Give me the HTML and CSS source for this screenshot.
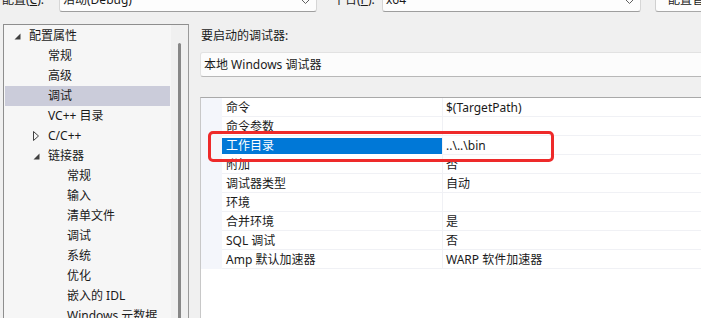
FILE: index.html
```html
<!DOCTYPE html>
<html lang="zh-CN">
<head>
    <meta charset="UTF-8">
    <title>调试 属性页</title>
    <link rel="stylesheet" href="styles.css">
</head>
<body>
    <div class="toolbar">
        <span class="label label-config">配置(<u>C</u>):</span>
        <div class="combo combo-config">
            <span>活动(Debug)</span>
            <svg class="chevron" width="9" height="6" viewBox="0 0 9 6"><path d="M1 1 L4.5 4.5 L8 1" fill="none" stroke="#606060" stroke-width="1"/></svg>
        </div>
        <span class="label label-platform">平台(<u>P</u>):</span>
        <div class="combo combo-platform">
            <span>x64</span>
            <svg class="chevron" width="9" height="6" viewBox="0 0 9 6"><path d="M1 1 L4.5 4.5 L8 1" fill="none" stroke="#606060" stroke-width="1"/></svg>
        </div>
        <button class="btn">配置管理器(<u>O</u>)...</button>
    </div>

    <div class="main">
        <div class="tree">
            <ul class="nodes">
                <li class="node lv0"><span class="twisty"><svg width="7" height="7" viewBox="0 0 7 7"><path d="M6.5 0.5 V6.5 H0.5 Z" fill="#404040"/></svg></span>配置属性</li>
                <li class="node lv1"><span class="twisty"></span>常规</li>
                <li class="node lv1"><span class="twisty"></span>高级</li>
                <li class="node lv1 selected"><span class="twisty"></span>调试</li>
                <li class="node lv1"><span class="twisty"></span>VC++ 目录</li>
                <li class="node lv1"><span class="twisty"><svg width="7" height="10" viewBox="0 0 7 10"><path d="M0.5 0.5 V9.5 L5.5 5 Z" fill="none" stroke="#404040" stroke-width="1"/></svg></span>C/C++</li>
                <li class="node lv1"><span class="twisty"><svg width="7" height="7" viewBox="0 0 7 7"><path d="M6.5 0.5 V6.5 H0.5 Z" fill="#404040"/></svg></span>链接器</li>
                <li class="node lv2"><span class="twisty"></span>常规</li>
                <li class="node lv2"><span class="twisty"></span>输入</li>
                <li class="node lv2"><span class="twisty"></span>清单文件</li>
                <li class="node lv2"><span class="twisty"></span>调试</li>
                <li class="node lv2"><span class="twisty"></span>系统</li>
                <li class="node lv2"><span class="twisty"></span>优化</li>
                <li class="node lv2"><span class="twisty"></span>嵌入的 IDL</li>
                <li class="node lv2"><span class="twisty"></span>Windows 元数据</li>
            </ul>
            <div class="scrollbar"><div class="thumb"></div></div>
        </div>

        <div class="pane">
            <div class="pane-label">要启动的调试器:</div>
            <div class="debugger-box">本地 Windows 调试器</div>

            <div class="grid">
                <div class="row"><div class="gutter"></div><div class="name">命令</div><div class="value">$(TargetPath)</div></div>
                <div class="row"><div class="gutter"></div><div class="name">命令参数</div><div class="value"></div></div>
                <div class="row active"><div class="gutter"></div><div class="name">工作目录</div><div class="value">..\..\bin</div></div>
                <div class="row"><div class="gutter"></div><div class="name">附加</div><div class="value">否</div></div>
                <div class="row"><div class="gutter"></div><div class="name">调试器类型</div><div class="value">自动</div></div>
                <div class="row"><div class="gutter"></div><div class="name">环境</div><div class="value"></div></div>
                <div class="row"><div class="gutter"></div><div class="name">合并环境</div><div class="value">是</div></div>
                <div class="row"><div class="gutter"></div><div class="name">SQL 调试</div><div class="value">否</div></div>
                <div class="row"><div class="gutter"></div><div class="name">Amp 默认加速器</div><div class="value">WARP 软件加速器</div></div>
                <div class="mark"></div>
            </div>
        </div>
    </div>
</body>
</html>
```

FILE: styles.css
```css
html, body { margin: 0; padding: 0; }
body { width: 701px; height: 318px; overflow: hidden; background: #f0f0f0; color: #1a1a1a; font-family: "Noto Sans", "Noto Sans CJK SC", sans-serif; font-size: 12px; line-height: 16px; }
u { text-decoration: underline; }

.toolbar { display: flex; align-items: center; height: 24px; margin-top: -12px; white-space: nowrap; }
.toolbar > * { flex-shrink: 0; }
.label { display: block; }
.label-config { margin-left: 2px; width: 57px; }
.label-platform { margin-left: 16px; width: 49px; }
.combo { position: relative; box-sizing: border-box; height: 24px; display: flex; align-items: center; padding-left: 3px; background: #fdfdfd; border: 1px solid #d6d6d6; border-bottom-color: #9e9e9e; border-radius: 3px; }
.combo-config { width: 258px; }
.combo-platform { width: 259px; }
.chevron { position: absolute; right: 6px; top: 10px; }
.btn { box-sizing: border-box; margin-left: 14px; width: 110px; height: 23px; padding: 0 0 0 12px; text-align: left; font: inherit; color: inherit; background: #fdfdfd; border: 1px solid #d0d0d0; border-bottom-color: #a8a8a8; border-radius: 3px; }

.main { display: flex; margin-top: 12px; padding-left: 3px; }

.tree { position: relative; box-sizing: border-box; width: 186px; height: 310px; padding-top: 1px; background: #f6f6f6; border: 1px solid #8e8e8e; border-right-color: #9a9a9a; flex-shrink: 0; }
.nodes { list-style: none; margin: 0; padding: 0 18px 0 0; }
.node { display: flex; align-items: center; height: 20px; line-height: 20px; margin-left: 1px; white-space: nowrap; }
.node.lv0 { padding-left: 9px; }
.node.lv1 { padding-left: 28px; }
.node.lv2 { padding-left: 47px; }
.twisty { display: flex; align-items: center; width: 15px; height: 20px; flex-shrink: 0; }
.node.selected { background: #cbccda; }
.scrollbar { position: absolute; top: 0; right: 0; bottom: 0; width: 17px; background: #f0f0f0; }
.thumb { position: absolute; top: 18px; bottom: 0; left: 7px; width: 3px; border-radius: 2px; background: #878787; }

.pane { margin-left: 11px; flex: 1; min-width: 0; }
.pane-label { margin: 2px 0 0 1px; height: 20px; line-height: 20px; }
.debugger-box { box-sizing: border-box; margin-top: 6px; width: 560px; height: 25px; line-height: 23px; padding-left: 3px; background: #fcfcfc; border: 1px solid #e2e2e2; border-bottom-color: #b8b8b8; border-radius: 3px 0 0 3px; white-space: nowrap; }

.grid { position: relative; box-sizing: border-box; margin-top: 20px; width: 560px; height: 260px; background: #fff; border-top: 1px solid #a9a9a9; border-left: 1px solid #c8c8c8; }
.row { display: grid; grid-template-columns: 21px 221px 1fr; height: 19px; }
.gutter { background: #f4f6fb; }
.name, .value { box-sizing: border-box; height: 19px; padding-top: 2px; line-height: 16px; border-bottom: 1px solid #f0f1f5; white-space: nowrap; }
.name { padding-left: 4px; border-right: 1px solid #f0f1f5; }
.value { padding-left: 3px; }
.row.active .name { padding-top: 0; background: #0078d7; color: #fff; border-top: 2px solid #fff; border-bottom-color: #fff; }
.mark { position: absolute; left: 7px; top: 33px; width: 346px; height: 31px; box-sizing: border-box; border: 3px solid #ee2a2a; border-radius: 5px; }
```
